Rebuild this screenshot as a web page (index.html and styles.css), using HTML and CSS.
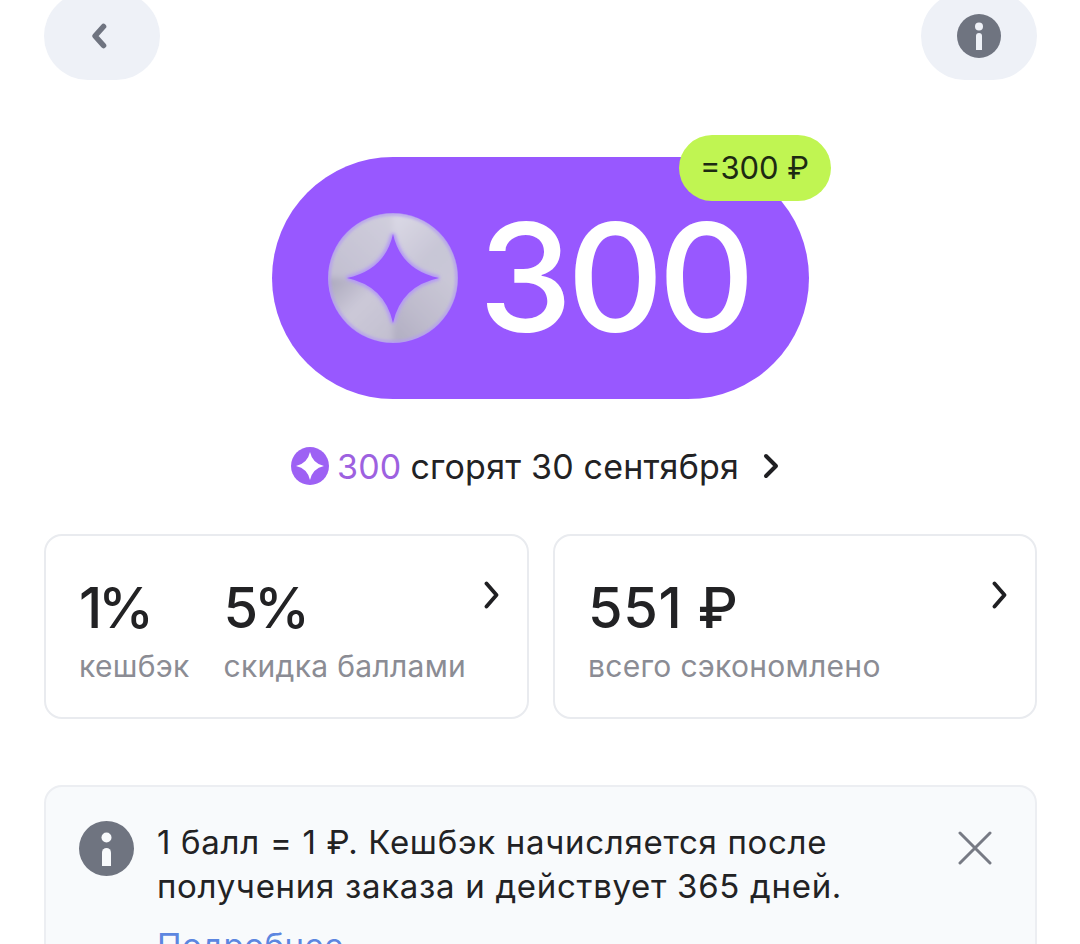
FILE: index.html
```html
<!DOCTYPE html>
<html lang="ru">
<head>
<meta charset="utf-8">
<title>Баллы</title>
<link rel="stylesheet" href="styles.css">
</head>
<body>
<main class="page">
  <header class="topbar">
    <button class="round-btn" aria-label="Назад">
      <svg class="back-icon" viewBox="0 0 20 30"><path d="M12.5 5.500 4 15l8.500 9.500" fill="none" stroke="#6f7480" stroke-width="5.600" stroke-linecap="round" stroke-linejoin="round"/></svg>
    </button>
    <button class="round-btn" aria-label="Информация">
      <svg class="info-icon" viewBox="0 0 44 44"><circle cx="22" cy="22" r="22" fill="#6f7480"/><circle cx="22" cy="12.500" r="4" fill="#eef1f7"/><path d="M22 19a3 3 0 0 1 3 3v14h-6V22a3 3 0 0 1 3-3z" fill="#eef1f7"/></svg>
    </button>
  </header>

  <section class="hero">
    <div class="pill">
      <svg class="coin" viewBox="0 0 130 130">
        <defs>
          <linearGradient id="p1" x1="0" y1="1" x2="1" y2="0"><stop offset="0" stop-color="#c0bdcf"/><stop offset="1" stop-color="#d2d0de"/></linearGradient>
          <linearGradient id="p1b" x1="0" y1="0" x2="1" y2="1"><stop offset="0" stop-color="#dedce8"/><stop offset=".6" stop-color="#c8c6d6"/><stop offset="1" stop-color="#cac8d8"/></linearGradient>
          <linearGradient id="p2" x1="0" y1="0" x2="1" y2="1"><stop offset="0" stop-color="#a5a2b8"/><stop offset=".45" stop-color="#ccc9d8"/><stop offset="1" stop-color="#c0bdce"/></linearGradient>
          <linearGradient id="p3" x1="1" y1="0" x2="0" y2="1"><stop offset="0" stop-color="#cdcbd9"/><stop offset=".55" stop-color="#bfbccd"/><stop offset="1" stop-color="#aeabc0"/></linearGradient>
          <filter id="soft" x="-20%" y="-20%" width="140%" height="140%"><feGaussianBlur stdDeviation="3"/></filter>
          <filter id="edge" x="-20%" y="-20%" width="140%" height="140%"><feGaussianBlur stdDeviation="1.500"/></filter>
          <clipPath id="disc"><circle cx="65" cy="65" r="64"/></clipPath>
        </defs>
        <circle cx="65" cy="65" r="65" fill="#b49df0"/>
        <g clip-path="url(#disc)">
          <g filter="url(#soft)">
            <path d="M65 -8H-8V65H18Q57 57 65 20z" fill="url(#p1)"/>
            <path d="M65 -8H138V65H111Q73 57 65 20z" fill="url(#p1b)"/>
            <path d="M-8 65V138H65V110Q57 73 18 65z" fill="url(#p2)"/>
            <path d="M138 65V138H65V110Q73 73 111 65z" fill="url(#p3)"/>
          </g>
          <circle cx="65" cy="65" r="64" fill="none" stroke="#b49df0" stroke-width="3" filter="url(#edge)"/>
        </g>
        <path d="M65 21Q73 57 111 65 73 73 65 110 57 73 19 65 57 57 65 21z" fill="#a583f5" stroke="#b59bf4" stroke-width="4" filter="url(#edge)"/>
        <path d="M65 21Q73 57 111 65 73 73 65 110 57 73 19 65 57 57 65 21z" fill="#9858ff"/>
      </svg>
      <span class="pill-value">300</span>
      <span class="badge">=300 ₽</span>
    </div>
    <a class="expire">
      <svg class="mini-coin" viewBox="0 0 38 38"><circle cx="19" cy="19" r="19" fill="#9d61f4"/><path d="M19 5Q21.500 16.500 33 19 21.500 21.500 19 33 16.500 21.500 5 19 16.500 16.500 19 5z" fill="#fff"/></svg>
      <span class="expire-num">300</span>
      <span class="expire-text">сгорят 30 сентября</span>
      <svg class="chev-large" viewBox="0 0 16 26"><path d="M3 3l10 10L3 23" fill="none" stroke="#1f1f22" stroke-width="4" stroke-linecap="round" stroke-linejoin="round"/></svg>
    </a>
  </section>

  <section class="cards">
    <article class="card">
      <div class="stats">
        <div class="stat"><div class="value value-pct">1%</div><div class="label">кешбэк</div></div>
        <div class="stat"><div class="value value-pct">5%</div><div class="label">скидка баллами</div></div>
      </div>
      <svg class="chev" viewBox="0 0 16 28"><path d="M2.500 2.500l10 11.500-10 11.500" fill="none" stroke="#1f1f22" stroke-width="3.800" stroke-linecap="round" stroke-linejoin="round"/></svg>
    </article>
    <article class="card">
      <div class="stats">
        <div class="stat"><div class="value value-sum">551 ₽</div><div class="label">всего сэкономлено</div></div>
      </div>
      <svg class="chev" viewBox="0 0 16 28"><path d="M2.500 2.500l10 11.500-10 11.500" fill="none" stroke="#1f1f22" stroke-width="3.800" stroke-linecap="round" stroke-linejoin="round"/></svg>
    </article>
  </section>

  <section class="notice">
    <svg class="notice-icon" viewBox="0 0 55 55"><circle cx="27.500" cy="27.500" r="27.500" fill="#6f7480"/><circle cx="27.500" cy="16.500" r="5" fill="#f8fafc"/><path d="M27.500 27a4.500 4.500 0 0 1 4.500 4.500V45h-9V31.500a4.500 4.500 0 0 1 4.500-4.500z" fill="#f8fafc"/></svg>
    <div class="notice-body">
      <p class="notice-text">1 балл = 1 ₽. Кешбэк начисляется после<br>получения заказа и действует 365 дней.</p>
      <a class="notice-link">Подробнее</a>
    </div>
    <svg class="close-icon" viewBox="0 0 34 34"><path d="M2 2l30 30M32 2 2 32" fill="none" stroke="#777a84" stroke-width="3" stroke-linecap="round"/></svg>
  </section>
</main>
</body>
</html>
```
FILE: styles.css
```css
* { box-sizing: border-box; }
html, body { margin: 0; height: 944px; overflow: hidden; background: #fff; }
body { font-family: Inter, "Noto Sans", sans-serif; color: #222224; }
.page { padding: 0 43px 0 44px; }

.topbar { display: flex; justify-content: space-between; margin-top: -8px; }
.round-btn {
  width: 116px; height: 88px; border: 0; padding: 0; border-radius: 44px;
  background: #eef1f7; display: flex; align-items: center; justify-content: center;
}
.back-icon { width: 20px; height: 30px; margin-right: 3px; }
.info-icon { width: 44px; height: 44px; }

.hero { display: flex; flex-direction: column; align-items: center; padding-top: 77px; padding-right: 1px; }
.pill {
  position: relative; width: 537px; height: 242px; border-radius: 121px;
  background: #9858ff; display: flex; align-items: center; padding-left: 56px;
}
.coin { width: 130px; height: 130px; flex: none; }
.pill-value {
  margin-left: 21px; font-size: 150px; line-height: 1; color: #fff;
  letter-spacing: -5.5px; font-weight: 500;
}
.badge {
  position: absolute; left: 407px; top: -22px; width: 152px; height: 66px;
  border-radius: 33px; background: #c0f552; color: #1d2a12; padding-bottom: 2px;
  display: flex; align-items: center; justify-content: center; font-size: 31px;
}
.expire { display: flex; align-items: center; margin: 48px 10px 0 0; height: 38px; font-size: 34px; letter-spacing: .2px; }
.mini-coin { width: 38px; height: 38px; margin-right: 8px; }
.expire-num { color: #9d61e0; margin-right: 9px; }
.chev-large { width: 16px; height: 26px; flex: none; margin-left: 24px; }

.cards { display: grid; grid-template-columns: 485fr 484fr; gap: 24px; margin-top: 49px; }
.card {
  height: 185px; border: 2px solid #e9ebef; border-radius: 18px; padding: 38px 27px 0 33px;
  display: flex; justify-content: space-between; align-items: flex-start;
}
.stats { display: flex; gap: 34px; }
.value { font-size: 56px; line-height: 68px; font-weight: 450; }
.value-pct { letter-spacing: -4px; }
.value-sum { letter-spacing: .6px; }
.label { font-size: 30px; line-height: 34px; margin-top: 7px; color: #8b8c94; letter-spacing: .3px; }
.chev { width: 16px; height: 28px; flex: none; margin-top: 7px; }

.notice {
  margin-top: 66px; height: 200px; border: 2px solid #eceef2; border-radius: 18px;
  background: #f8fafc; padding: 33px 43px 0 33px; display: flex; align-items: flex-start;
}
.notice-icon { width: 55px; height: 55px; flex: none; margin: 1px 23px 0 0; }
.notice-body { flex: 1; }
.notice-text { margin: 0; font-size: 33px; line-height: 44px; letter-spacing: .7px; }
.notice-link { display: block; margin-top: 15px; font-size: 33px; line-height: 44px; color: #5c86e0; letter-spacing: .5px; }
.close-icon { width: 34px; height: 34px; margin-top: 11px; flex: none; }
```
